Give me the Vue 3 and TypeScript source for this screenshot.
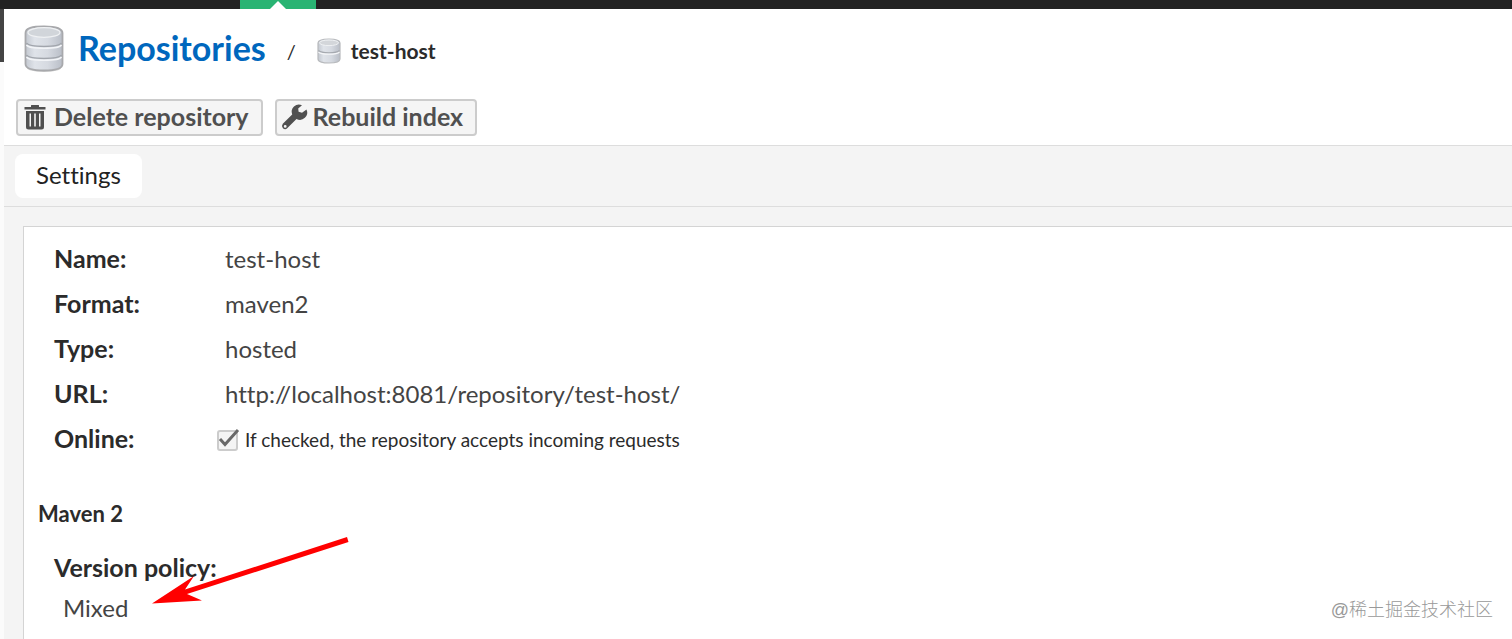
<script setup lang="ts">
interface Field {
  label: string
  value: string
}

const fields: Field[] = [
  { label: 'Name:', value: 'test-host' },
  { label: 'Format:', value: 'maven2' },
  { label: 'Type:', value: 'hosted' },
  { label: 'URL:', value: 'http://localhost:8081/repository/test-host/' },
]
</script>

<template>
  <div class="page">
    <header class="topbar"><span class="active-mode"></span></header>
    <div class="body">
      <aside class="rail"><span class="rail-top"></span></aside>
      <main class="content">
        <nav class="crumbs">
          <svg class="db-large" viewBox="0 0 40 48" aria-hidden="true">
            <defs>
              <linearGradient id="drum" x1="0" x2="1" y1="0" y2="0">
                <stop offset="0" stop-color="#c3c8d0" />
                <stop offset="0.25" stop-color="#dfe3e9" />
                <stop offset="0.6" stop-color="#d6dae1" />
                <stop offset="1" stop-color="#b9bec7" />
              </linearGradient>
            </defs>
            <ellipse cx="20" cy="43" rx="17" ry="4" fill="#d4d4d4" />
            <path d="M1.500 8C1.500 3 8 1.500 20 1.500S38.500 3 38.500 8V39C38.500 44 31 45.500 20 45.500S1.500 44 1.500 39Z" fill="url(#drum)" stroke="#a8a9ac" stroke-width="1.800" />
            <ellipse cx="20" cy="7.500" rx="16" ry="4.800" fill="#d1d5da" stroke="#eff1f3" stroke-width="1.200" />
            <path d="M2.500 18C5 22.500 35 22.500 37.500 18M2.500 30C5 34.500 35 34.500 37.500 30" fill="none" stroke="#a1a5ac" stroke-width="1.500" />
            <path d="M2.500 20C5 24.300 35 24.300 37.500 20M2.500 32C5 36.300 35 36.300 37.500 32" fill="none" stroke="#f2f4f7" stroke-width="1.500" />
          </svg>
          <a class="title" href="#repositories">Repositories</a>
          <span class="slash">/</span>
          <svg class="db-small" viewBox="0 0 24 26" aria-hidden="true">
            <path d="M1 5C1 2 5 1 12 1S23 2 23 5V21C23 24 18 25 12 25S1 24 1 21Z" fill="url(#drum)" stroke="#b8babd" stroke-width="1.200" />
            <ellipse cx="12" cy="4.800" rx="9.500" ry="2.800" fill="#d3d6da" stroke="#eff1f3" />
            <path d="M1.500 12.500C4 15.500 20 15.500 22.500 12.500" fill="none" stroke="#a5a9af" stroke-width="1.200" />
            <path d="M1.500 14C4 17 20 17 22.500 14" fill="none" stroke="#f5f6f8" stroke-width="1.200" />
          </svg>
          <span class="current">test-host</span>
        </nav>

        <div class="actions">
          <button type="button" class="action">
            <svg class="glyph" viewBox="0 0 24 26" aria-hidden="true">
              <path d="M8 3V1.500Q8 1 8.500 1H15.500Q16 1 16 1.500V3H22.500V5.500H1.500V3Z" fill="#505050" />
              <path fill-rule="evenodd" d="M3 7H21V23Q21 25.500 18.500 25.500H5.500Q3 25.500 3 23ZM6.500 9.500V22.500H8V9.500ZM11.200 9.500V22.500H12.800V9.500ZM16 9.500V22.500H17.500V9.500Z" fill="#505050" />
            </svg>
            Delete repository
          </button>
          <button type="button" class="action">
            <svg class="glyph" viewBox="0 0 24 26" aria-hidden="true">
              <path fill-rule="evenodd" d="M20 1.200A7.300 7.300 0 0 0 10.200 10.500L.8 19.800Q-.9 22 .9 24.200Q3.100 26.200 5.200 24.300L14.500 15A7.300 7.300 0 0 0 24.500 5.500L20 8.700L16.600 7.800L16.200 4.600ZM3.200 21A1.400 1.400 0 1 1 3.200 23.800A1.400 1.400 0 1 1 3.200 21Z" fill="#505050" />
            </svg>
            Rebuild index
          </button>
        </div>

        <div class="tabs" role="tablist">
          <button type="button" class="tab" role="tab" aria-selected="true">Settings</button>
        </div>

        <div class="surface">
          <section class="panel">
            <dl class="fields">
              <div v-for="field in fields" :key="field.label" class="row">
                <dt>{{ field.label }}</dt>
                <dd>{{ field.value }}</dd>
              </div>
              <div class="row">
                <dt>Online:</dt>
                <dd class="online">
                  <span class="check">
                    <input id="online" type="checkbox" checked />
                    <svg class="tick" viewBox="0 0 24 22" aria-hidden="true">
                      <path d="M3 11L8 16.500L21 2" fill="none" stroke="#686868" stroke-width="3" />
                    </svg>
                  </span>
                  <label for="online">If checked, the repository accepts incoming requests</label>
                </dd>
              </div>
            </dl>
            <h2>Maven 2</h2>
            <div class="policy">
              <div class="policy-label">Version policy:</div>
              <div class="policy-value">Mixed</div>
              <svg class="arrow" viewBox="0 0 200 70" aria-hidden="true">
                <path d="M196 1L197.500 6L36 58L51 64.500L1 67.500L43 40L34 53.500Z" fill="#f00" />
              </svg>
            </div>
          </section>
        </div>
      </main>
    </div>
    <div class="watermark">@稀土掘金技术社区</div>
  </div>
</template>

<style>
body {
  margin: 0;
}
</style>

<style scoped>
.page {
  position: relative;
  display: flex;
  flex-direction: column;
  min-height: 100vh;
  overflow: hidden;
  background: #fff;
  color: #2b2b2b;
  font-family: Lato, "Liberation Sans", sans-serif;
  font-size: 24px;
  font-variant-ligatures: none;
  line-height: 30px;
}
.topbar {
  height: 9px;
  padding-left: 240px;
  background: #222;
}
.active-mode {
  display: block;
  width: 76px;
  height: 9px;
  background: #29b473;
}
.active-mode::after {
  content: "";
  display: block;
  width: 16px;
  height: 9px;
  margin: 0 auto;
  background: #fff;
  clip-path: polygon(50% 1px, 100% 100%, 0 100%);
}
.body {
  display: flex;
  flex: 1;
}
.rail {
  width: 4px;
  background: #fbfbfb;
}
.rail-top {
  display: block;
  height: 53px;
  background: #444;
}
.content {
  display: flex;
  flex: 1;
  flex-direction: column;
  min-width: 0;
}
.crumbs {
  display: flex;
  align-items: center;
  height: 80px;
  padding-left: 20px;
}
.db-large {
  width: 40px;
  height: 48px;
}
.title {
  margin: 0 0 2px 14px;
  color: #0067bd;
  font-size: 34px;
  font-weight: 700;
  line-height: 40px;
  text-decoration: none;
}
.slash {
  margin: 4px 21px 0;
  font-size: 20px;
}
.db-small {
  width: 24px;
  height: 26px;
  margin-top: 4px;
}
.current {
  margin: 4px 0 0 10px;
  font-size: 21px;
  font-weight: 700;
}
.actions {
  display: flex;
  gap: 12px;
  padding: 10px 12px 9px;
}
.action {
  display: flex;
  align-items: center;
  gap: 7px;
  height: 37px;
  padding: 0 12px 4px 5px;
  border: 2px solid #ccc;
  border-radius: 4px;
  background: #f5f5f5;
  color: #505050;
  font: inherit;
  font-size: 25px;
  font-weight: 700;
}
.glyph {
  width: 24px;
  height: 26px;
  margin-top: 3px;
  overflow: visible;
}
.tabs {
  padding: 8px 11px;
  border: solid #ddd;
  border-width: 1px 0;
  background: #f4f4f4;
}
.tab {
  display: block;
  height: 44px;
  padding: 0 21px 2px;
  border: 0;
  border-radius: 8px;
  background: #fff;
  color: #222;
  font: inherit;
}
.surface {
  display: flex;
  flex: 1;
  padding: 19px 0 0 19px;
  background: #f4f4f4;
}
.panel {
  flex: 1;
  padding: 9px 0 0 14px;
  border: solid #d4d4d4;
  border-width: 1px 0 0 1px;
  background: #fff;
}
.fields {
  margin: 0 0 0 16px;
}
.row {
  display: flex;
  align-items: center;
  height: 45px;
}
dt {
  width: 171px;
  padding-bottom: 2px;
  font-size: 25px;
  font-weight: 700;
}
dd {
  margin: 0;
  color: #444;
}
.online {
  display: flex;
  align-items: center;
  gap: 7px;
  margin-left: -8px;
  padding-top: 3px;
  color: #2b2b2b;
  font-size: 19px;
}
.check {
  position: relative;
  width: 21px;
  height: 21px;
}
.check input {
  display: block;
  width: 21px;
  height: 21px;
  margin: 0;
  border: 2px solid #ccc;
  border-radius: 3px;
  appearance: none;
  background: #f4f4f4;
}
.tick {
  position: absolute;
  top: -2px;
  left: 0;
  width: 24px;
  height: 22px;
  pointer-events: none;
}
h2 {
  margin: 38px 0 23px;
  font-size: 22px;
  font-weight: 700;
  line-height: 30px;
}
.policy {
  position: relative;
  padding-left: 16px;
}
.policy-label {
  font-size: 25px;
  font-weight: 700;
}
.policy-value {
  margin: 11px 0 0 9px;
  color: #444;
}
.arrow {
  position: absolute;
  top: -16px;
  left: 113px;
  width: 200px;
  height: 70px;
}
.watermark {
  position: absolute;
  right: 19px;
  bottom: 16px;
  color: #999;
  font-family: "Liberation Sans", "Noto Sans CJK SC", sans-serif;
  font-size: 18px;
  font-weight: 300;
  line-height: 26px;
}
</style>
